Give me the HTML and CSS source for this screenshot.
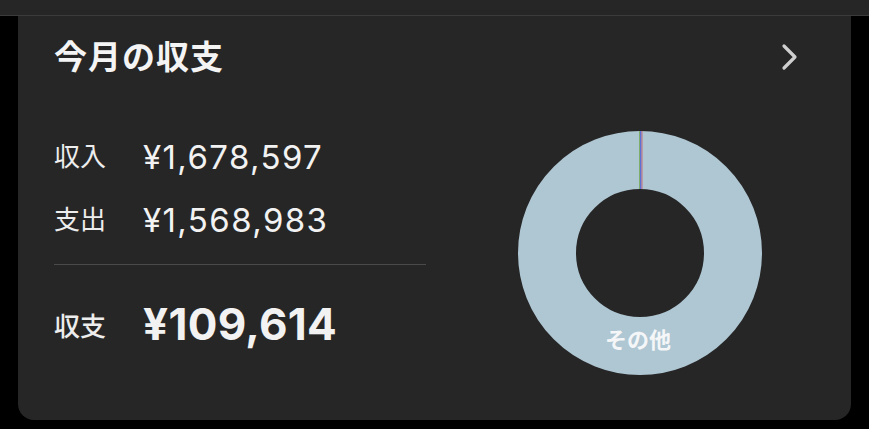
FILE: index.html
```html
<!DOCTYPE html>
<html lang="ja">
<head>
<meta charset="utf-8">
<link rel="stylesheet" href="styles.css">
</head>
<body>
<div class="topbar"></div>
<section class="card">
  <header class="card-head">
    <h2 class="title">今月の収支</h2>
    <svg class="chev" width="20" height="30" viewBox="0 0 20 30"><path d="M4 4 L15 15 L4 26" fill="none" stroke="#cfcfcf" stroke-width="3.2" stroke-linecap="round" stroke-linejoin="round"/></svg>
  </header>
  <div class="card-body">
    <div class="summary">
      <div class="row"><span class="label">収入</span><span class="amount">¥1,678,597</span></div>
      <div class="row"><span class="label">支出</span><span class="amount">¥1,568,983</span></div>
      <div class="divider"></div>
      <div class="row total"><span class="label">収支</span><span class="amount">¥109,614</span></div>
    </div>
    <div class="chart">
      <svg width="246" height="246" viewBox="0 0 246 246">
        <circle cx="123" cy="123" r="93" fill="none" stroke="#afc6d3" stroke-width="58"/>
        <rect x="122" y="1" width="1" height="58" fill="#7fae6a"/>
        <rect x="123" y="1" width="1.5" height="58" fill="#5b6fd8"/>
        <rect x="124.5" y="1" width="1" height="58" fill="#c4707a"/>
      </svg>
      <span class="chart-label">その他</span>
    </div>
  </div>
</section>
</body>
</html>
```
FILE: styles.css
```css
* { box-sizing: border-box; }
html, body { margin: 0; padding: 0; }
body {
  background: #000;
  width: 869px;
  height: 429px;
  overflow: hidden;
  font-family: Inter, "Noto Sans CJK JP", sans-serif;
  color: #f2f2f2;
}
.topbar {
  height: 16px;
  background: #262626;
  border-bottom: 1px solid #3b3b3b;
}
.card {
  margin: 0 18px;
  height: 404px;
  background: #262626;
  border-radius: 0 0 16px 16px;
  padding: 0 36px;
}
.card-head {
  display: flex;
  align-items: center;
  justify-content: space-between;
  height: 76px;
  padding-top: 2px;
}
.title {
  margin: 0;
  font-family: "Noto Sans CJK JP", sans-serif;
  font-size: 33px;
  font-weight: 700;
  letter-spacing: 1px;
  color: #f4f4f4;
}
.chev { margin-right: 15px; margin-top: 4px; }
.card-body {
  display: flex;
  align-items: flex-start;
}
.summary {
  width: 372px;
  padding-top: 33px;
}
.row {
  display: flex;
  align-items: center;
  height: 63px;
}
.label {
  width: 89px;
  font-family: "Noto Sans CJK JP", sans-serif;
  font-size: 26px;
  font-weight: 400;
  color: #ededed;
  position: relative;
  top: -2px;
}
.amount {
  font-size: 33px;
  font-weight: 400;
  letter-spacing: 1.4px;
}
.divider {
  height: 1px;
  background: #4a4a4a;
  margin: 13px 0 0;
}
.total { height: 118px; }
.total .label { font-weight: 500; top: 0; }
.total .amount { font-size: 44px; font-weight: 700; letter-spacing: 0.3px; }
.chart {
  position: relative;
  margin-left: 91px;
  margin-top: 38px;
  width: 246px;
  height: 246px;
}
.chart svg { display: block; }
.chart-label {
  position: absolute;
  left: 0;
  right: 0;
  top: 194px;
  text-align: center;
  font-family: "Noto Sans CJK JP", sans-serif;
  font-size: 22px;
  font-weight: 700;
  color: #f4f6f8;
  line-height: 28px;
  margin-left: -4px;
}
```
